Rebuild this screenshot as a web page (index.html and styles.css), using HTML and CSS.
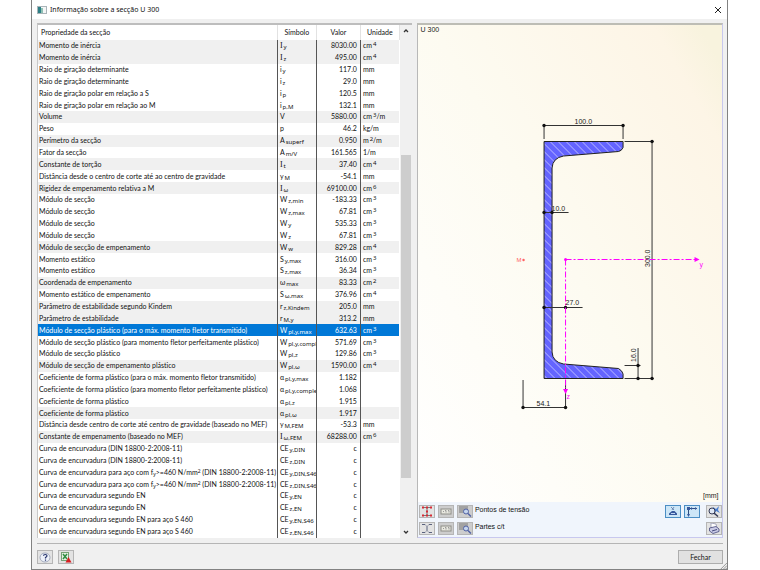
FILE: index.html
```html
<!DOCTYPE html>
<html lang="pt">
<head>
<meta charset="utf-8">
<title>Informação sobre a secção U 300</title>
<link rel="stylesheet" href="styles.css">
</head>
<body>
<main class="dialog">
  <header class="titlebar">
    <svg class="app-icon" viewBox="0 0 10 8"><rect x=".5" y=".5" width="9" height="7" fill="#f4f6f6" stroke="#a9b4b8"/><rect x="1" y="1" width="3" height="6" fill="#2d7f86"/><rect x="4" y="2" width="2" height="5" fill="#8fc0b4"/></svg>
    <h1 class="title">Informação sobre a secção U 300</h1>
    <button class="close" type="button" aria-label="Fechar janela"><svg viewBox="0 0 8 8"><path d="M1 1L7 7M7 1L1 7" stroke="#222" stroke-width="1" fill="none"/></svg></button>
  </header>

  <div class="content">
    <section class="list">
      <table class="props">
        <colgroup><col><col class="c-sym"><col class="c-val"><col class="c-unit"></colgroup>
        <thead><tr><th>Propriedade da secção</th><th>Símbolo</th><th>Valor</th><th>Unidade</th></tr></thead>
        <tbody>
          <tr class="alt"><td>Momento de inércia</td><td><i>I</i><sub>y</sub></td><td>8030.00</td><td>cm<sup>4</sup></td></tr>
          <tr class="alt"><td>Momento de inércia</td><td><i>I</i><sub>z</sub></td><td>495.00</td><td>cm<sup>4</sup></td></tr>
          <tr><td>Raio de giração determinante</td><td>i<sub>y</sub></td><td>117.0</td><td>mm</td></tr>
          <tr><td>Raio de giração determinante</td><td>i<sub>z</sub></td><td>29.0</td><td>mm</td></tr>
          <tr><td>Raio de giração polar em relação a S</td><td>i<sub>p</sub></td><td>120.5</td><td>mm</td></tr>
          <tr><td>Raio de giração polar em relação ao M</td><td>i<sub>p,M</sub></td><td>132.1</td><td>mm</td></tr>
          <tr class="alt"><td>Volume</td><td>V</td><td>5880.00</td><td>cm<sup>3</sup>/m</td></tr>
          <tr><td>Peso</td><td>p</td><td>46.2</td><td>kg/m</td></tr>
          <tr class="alt"><td>Perímetro da secção</td><td>A<sub>superf</sub></td><td>0.950</td><td>m<sup>2</sup>/m</td></tr>
          <tr><td>Fator da secção</td><td>A<sub>m/V</sub></td><td>161.565</td><td>1/m</td></tr>
          <tr class="alt"><td>Constante de torção</td><td><i>I</i><sub>t</sub></td><td>37.40</td><td>cm<sup>4</sup></td></tr>
          <tr><td>Distância desde o centro de corte até ao centro de gravidade</td><td>y<sub>M</sub></td><td>-54.1</td><td>mm</td></tr>
          <tr class="alt"><td>Rigidez de empenamento relativa a M</td><td><i>I</i><sub>ω</sub></td><td>69100.00</td><td>cm<sup>6</sup></td></tr>
          <tr><td>Módulo de secção</td><td>W<sub>z,min</sub></td><td>-183.33</td><td>cm<sup>3</sup></td></tr>
          <tr><td>Módulo de secção</td><td>W<sub>z,max</sub></td><td>67.81</td><td>cm<sup>3</sup></td></tr>
          <tr><td>Módulo de secção</td><td>W<sub>y</sub></td><td>535.33</td><td>cm<sup>3</sup></td></tr>
          <tr><td>Módulo de secção</td><td>W<sub>z</sub></td><td>67.81</td><td>cm<sup>3</sup></td></tr>
          <tr class="alt"><td>Módulo de secção de empenamento</td><td>W<sub>w</sub></td><td>829.28</td><td>cm<sup>4</sup></td></tr>
          <tr><td>Momento estático</td><td>S<sub>y,max</sub></td><td>316.00</td><td>cm<sup>3</sup></td></tr>
          <tr><td>Momento estático</td><td>S<sub>z,max</sub></td><td>36.34</td><td>cm<sup>3</sup></td></tr>
          <tr class="alt"><td>Coordenada de empenamento</td><td>ω<sub>max</sub></td><td>83.33</td><td>cm<sup>2</sup></td></tr>
          <tr><td>Momento estático de empenamento</td><td>S<sub>ω,max</sub></td><td>376.96</td><td>cm<sup>4</sup></td></tr>
          <tr class="alt"><td>Parâmetro de estabilidade segundo Kindem</td><td>r<sub>z,Kindem</sub></td><td>205.0</td><td>mm</td></tr>
          <tr class="alt"><td>Parâmetro de estabilidade</td><td>r<sub>M,y</sub></td><td>313.2</td><td>mm</td></tr>
          <tr class="selected"><td>Módulo de secção plástico (para o máx. momento fletor transmitido)</td><td>W<sub>pl,y,max</sub></td><td>632.63</td><td>cm<sup>3</sup></td></tr>
          <tr><td>Módulo de secção plástico (para momento fletor perfeitamente plástico)</td><td>W<sub>pl,y,compl</sub></td><td>571.69</td><td>cm<sup>3</sup></td></tr>
          <tr><td>Módulo de secção plástico</td><td>W<sub>pl,z</sub></td><td>129.86</td><td>cm<sup>3</sup></td></tr>
          <tr class="alt"><td>Módulo de secção de empenamento plástico</td><td>W<sub>pl,ω</sub></td><td>1590.00</td><td>cm<sup>4</sup></td></tr>
          <tr><td>Coeficiente de forma plástico (para o máx. momento fletor transmitido)</td><td>α<sub>pl,y,max</sub></td><td>1.182</td><td></td></tr>
          <tr><td>Coeficiente de forma plástico (para momento fletor perfeitamente plástico)</td><td>α<sub>pl,y,comple</sub></td><td>1.068</td><td></td></tr>
          <tr><td>Coeficiente de forma plástico</td><td>α<sub>pl,z</sub></td><td>1.915</td><td></td></tr>
          <tr class="alt"><td>Coeficiente de forma plástico</td><td>α<sub>pl,ω</sub></td><td>1.917</td><td></td></tr>
          <tr><td>Distância desde centro de corte até centro de gravidade (baseado no MEF)</td><td>y<sub>M,FEM</sub></td><td>-53.3</td><td>mm</td></tr>
          <tr class="alt"><td>Constante de empenamento (baseado no MEF)</td><td><i>I</i><sub>ω,FEM</sub></td><td>68288.00</td><td>cm<sup>6</sup></td></tr>
          <tr><td>Curva de encurvadura (DIN 18800-2:2008-11)</td><td>CE<sub>y,DIN</sub></td><td>c</td><td></td></tr>
          <tr><td>Curva de encurvadura (DIN 18800-2:2008-11)</td><td>CE<sub>z,DIN</sub></td><td>c</td><td></td></tr>
          <tr><td>Curva de encurvadura para aço com f<sub>y</sub>&gt;=460 N/mm<sup>2</sup> (DIN 18800-2:2008-11)</td><td>CE<sub>y,DIN,S46</sub></td><td>c</td><td></td></tr>
          <tr><td>Curva de encurvadura para aço com f<sub>y</sub>&gt;=460 N/mm<sup>2</sup> (DIN 18800-2:2008-11)</td><td>CE<sub>z,DIN,S46</sub></td><td>c</td><td></td></tr>
          <tr><td>Curva de encurvadura segundo EN</td><td>CE<sub>y,EN</sub></td><td>c</td><td></td></tr>
          <tr><td>Curva de encurvadura segundo EN</td><td>CE<sub>z,EN</sub></td><td>c</td><td></td></tr>
          <tr><td>Curva de encurvadura segundo EN para aço S 460</td><td>CE<sub>y,EN,S46</sub></td><td>c</td><td></td></tr>
          <tr><td>Curva de encurvadura segundo EN para aço S 460</td><td>CE<sub>z,EN,S46</sub></td><td>c</td><td></td></tr>
        </tbody>
      </table>
      <div class="scrollbar">
        <svg class="arrow" viewBox="0 0 10 10"><path d="M3 6L5 4L7 6" fill="none" stroke="#333" stroke-width="1.3"/></svg>
        <div class="track"><div class="thumb"></div></div>
        <svg class="arrow" viewBox="0 0 10 10"><path d="M3 4L5 6L7 4" fill="none" stroke="#333" stroke-width="1.3"/></svg>
      </div>
    </section>

    <section class="preview">
      <svg class="canvas" viewBox="418 25 303 477" preserveAspectRatio="xMidYMid meet">
        <defs>
          <pattern id="hatch" width="8" height="8" patternUnits="userSpaceOnUse"><rect width="8" height="8" fill="#6464ff"/><path d="M-1 -1L9 9M-1 7L1 9M7 -1L9 1" stroke="#b9b9ff" stroke-width="1"/></pattern>
          <g id="dot"><circle r="1.7"/></g>
        </defs>
        <text class="lbl" x="420" y="32">U 300</text>
        <text class="lbl" x="718" y="498" text-anchor="end">[mm]</text>
        <path d="M543.5 141.500H622.500V147.500Q621 151 618 151.500L563 156Q552 158 551.500 168V352Q552 362 563 364L618 368.500Q622 371 622.500 374V378.500H543.500Z" fill="url(#hatch)" stroke="#222" stroke-width="1"/>
        <g class="dim">
          <path d="M543.500 125.500H622.500M543.500 124V139M622.500 124V139M624 141.500H653M651.500 141V379M624 378.500H653M543 212.500H568M543 307.500H582M624 365.500H640M637.500 348V379M522.500 380V408M522 407.500H566M565 380V408"/>
        </g>
        <g fill="#111"><use href="#dot" x="543.5" y="125.5"/><use href="#dot" x="622.5" y="125.5"/><use href="#dot" x="651.5" y="141.500"/><use href="#dot" x="651.5" y="378.5"/><use href="#dot" x="543.5" y="212.500"/><use href="#dot" x="551.5" y="212.500"/><use href="#dot" x="543.5" y="307.500"/><use href="#dot" x="565" y="307.500"/><use href="#dot" x="637.5" y="365.5"/><use href="#dot" x="637.5" y="378.5"/><use href="#dot" x="522.5" y="407.500"/><use href="#dot" x="565" y="407.500"/></g>
        <path d="M565 259.500H696M565 259.500V388" fill="none" stroke="#f0f" stroke-width="1" stroke-dasharray="6 2 2 2"/>
        <path d="M694 257L699 259.500L694 262ZM562.500 389H567.500L565 394Z" fill="#f0f"/>
        <circle cx="565" cy="259.500" r="1.5" fill="#f0f"/>
        <text class="axis" x="699" y="267">y</text><text class="axis" x="566" y="399">z</text>
        <text class="shear" x="516" y="262">M</text><circle cx="523" cy="260" r="1.200" fill="#ff6262"/>
        <g class="lbl"><text x="574" y="124">100.0</text><text x="551" y="211">10.0</text><text x="565" y="305">27.0</text><text x="536" y="406">54.1</text><text transform="translate(649 267) rotate(-90)">300.0</text><text transform="translate(635 362) rotate(-90)">16.0</text></g>
      </svg>
      <div class="tools">
        <div class="tool-row">
          <button class="tool" type="button" aria-label="Mostrar pontos de tensão"><svg viewBox="0 0 14 11"><path d="M2 1.500H12M7 1.500V9.500M2 9.500H12" stroke="#777" fill="none"/><path d="M2 0.500h2v2h-2zM6 0.500h2v2h-2zM10 .5h2v2h-2zM6 4.500h2v2h-2zM2 8.500h2v2h-2zM6 8.500h2v2h-2zM10 8.500h2v2h-2z" fill="#d62a35"/></svg></button>
          <button class="tool dim-btn" type="button" aria-label="Numeração dos pontos" disabled><svg viewBox="0 0 14 11"><rect x="2" y="3" width="10" height="5" fill="#e9e9e0" stroke="#8d8d88"/><path d="M4 5.500h1M6 4.500h1v2M9 4.500h1v2" stroke="#999" fill="none"/></svg></button>
          <button class="tool dim-btn" type="button" aria-label="Detalhes dos pontos"><svg viewBox="0 0 14 11"><rect x="1" width="9" height="7" fill="#a2a2a2"/><circle cx="8" cy="5.500" r="2.500" fill="#c5d5ee" stroke="#5263a5"/><path d="M10 7.500L13 10.500" stroke="#5263a5" stroke-width="1.500"/></svg></button>
          <span class="tool-label">Pontos de tensão</span>
          <button class="tool active" type="button" aria-label="Cotas"><svg viewBox="0 0 14 11"><path d="M5 1L8 4M8 1L6 4" stroke="#5b77a5" stroke-width=".8"/><path d="M3 9V7.500L6 5H8.500L11 7.500V9Z" fill="#36589c"/><path d="M5 7.500H9" stroke="#bcd3f3"/></svg></button>
          <button class="tool active gap" type="button" aria-label="Eixos"><svg viewBox="0 0 14 11"><path d="M3.500 10V2.500H12" stroke="#2d4b7c" fill="none"/><path d="M2 1h3v3h-3zM6 1L8 2.500L6 4M10 1L12 2.500L10 4M2 8L3.500 11L5 8" fill="#36589c"/></svg></button>
          <button class="tool" type="button" aria-label="Ajustar vista"><svg viewBox="0 0 14 11"><path d="M6 1L9 3L12 0L11 4L13 7L9 5L7 9L6 5Z" fill="#4a7fd0"/><circle cx="5" cy="5" r="3" fill="#dfe8f6" stroke="#333a55"/><path d="M7 7L11 10.500" stroke="#333a55" stroke-width="1.500"/></svg></button>
        </div>
        <div class="tool-row">
          <button class="tool" type="button" aria-label="Mostrar partes c/t"><svg viewBox="0 0 14 11"><path d="M2 1.500H5M9 1.500H12M2 9.500H5M9 9.500H12M5 1.500L6 2.500M9 1.500L8 2.500M7 3V8M5 9.500L6 8.500M9 9.500L8 8.500" stroke="#59627e" fill="none"/></svg></button>
          <button class="tool dim-btn" type="button" aria-label="Numeração das partes" disabled><svg viewBox="0 0 14 11"><rect x="2" y="3" width="10" height="5" fill="#e9e9e0" stroke="#8d8d88"/><path d="M4 5.500h1M6 4.500h1v2M9 4.500h1v2" stroke="#999" fill="none"/></svg></button>
          <button class="tool dim-btn" type="button" aria-label="Detalhes das partes"><svg viewBox="0 0 14 11"><rect x="1" width="9" height="7" fill="#a2a2a2"/><circle cx="8" cy="5.500" r="2.500" fill="#c5d5ee" stroke="#5263a5"/><path d="M10 7.500L13 10.500" stroke="#5263a5" stroke-width="1.500"/></svg></button>
          <span class="tool-label">Partes c/t</span>
          <button class="tool" type="button" aria-label="Imprimir"><svg viewBox="0 0 14 11"><path d="M4 0L9 1L10 5L4 5Z" fill="#fff" stroke="#888ca8" stroke-width=".7"/><path d="M2.500 5L9 3.500L12 6V8.500L6 10.500L2.500 8Z" fill="#c9cbe6" stroke="#45497c" stroke-width=".8"/><path d="M5 8L10 6.500" stroke="#45497c"/></svg></button>
        </div>
      </div>
    </section>
  </div>

  <footer class="footer">
    <button class="tool" type="button" aria-label="Ajuda"><svg viewBox="0 0 14 11"><ellipse cx="7" cy="5.500" rx="5" ry="4.500" fill="#eef2fa" stroke="#a2aabd"/><path d="M5.500 3.800Q5.500 2.500 7.200 2.500Q9 2.500 9 3.800Q9 4.800 7.500 5.500V6.500M7.500 7.500V8.700" stroke="#28366e" stroke-width="1.200" fill="none"/></svg></button>
    <button class="tool" type="button" aria-label="Exportar"><svg viewBox="0 0 14 11"><rect x="2.500" y=".5" width="7" height="8" fill="#e5f0e4" stroke="#77a277"/><path d="M4 2L8 7M8 2L4 7" stroke="#2f8c41" stroke-width="1.500"/><path d="M9.500 5L12.500 10.500H6.500Z" fill="#d81e22"/></svg></button>
    <button class="ok" type="button">Fechar</button>
  </footer>
  <svg class="grip" viewBox="0 0 8 8"><path d="M1 8L8 1M4 8L8 4M6.500 8L8 6.500" stroke="#8c8c8c" fill="none"/></svg>
</main>
</body>
</html>
```
FILE: styles.css
```css
* { box-sizing: border-box; }
body {
  margin: 0;
  padding: 0 32px 0 31px;
  background: #fff;
  color: #111;
  font: 7px/11px Lato, "Liberation Sans", sans-serif;
  font-variant-ligatures: none;
}
button { font: inherit; color: inherit; padding: 0; margin: 0; }
svg { display: block; }
.dialog {
  position: relative;
  display: flex;
  flex-direction: column;
  min-height: 100vh;
  border: 1px solid #828282;
  border-top: 0;
  background: #f0f0f0;
}
.titlebar {
  display: flex;
  align-items: center;
  gap: 3px;
  height: 19px;
  padding: 0 5px;
  background: #fff;
}
.app-icon { width: 10px; height: 8px; }
.title { flex: 1; margin: 0; font: 7px/11px "Noto Sans", sans-serif; }
.close { width: 8px; height: 8px; border: 0; background: none; }
.content {
  flex: 1 0 auto;
  display: flex;
  gap: 5px;
  padding: 4px 4px 5px 5px;
}
.list {
  flex: 375 1 0;
  display: flex;
  min-width: 0;
  border: 1px solid #c8c8c8;
  border-top: 2px solid #bdbdbd;
  border-right: 0;
  border-bottom: 0;
  background: #fff;
}
.props {
  flex: 1;
  width: 100%;
  min-width: 0;
  border-collapse: collapse;
  table-layout: fixed;
}
.c-sym { width: 39px; }
.c-val { width: 44px; }
.c-unit { width: 39px; }
.props th {
  height: 15px;
  padding: 0;
  font-weight: 400;
  text-align: center;
  border-right: 1px solid #e2e2e2;
}
.props th:first-child { padding-left: 3px; text-align: left; }
.props td {
  height: 11px;
  padding: 0 1px;
  overflow: hidden;
  white-space: nowrap;
  border-right: 1px solid #555;
}
.props td:first-child { padding-right: 0; }
.props td:nth-child(2) { padding-left: 2px; }
.props td:nth-child(3) { padding-right: 3px; text-align: right; }
.props td:last-child { padding-left: 2px; border-right: 0; }
.props i { font: 8px/0 "Liberation Serif", serif; }
.props sub, .props sup {
  margin-left: 1px;
  font: 6px/0 "Noto Sans", "Liberation Sans", sans-serif;
}
.props td:first-child sub, .props td:first-child sup { margin-left: 0; font-size: 5px; }
.props sub { vertical-align: -1px; }
.props sup { vertical-align: 2px; }
.alt { background: #f0f0f0; }
.selected { background: #0078d7; color: #fff; }
.scrollbar {
  flex: none;
  display: flex;
  flex-direction: column;
  width: 12px;
  padding: 0 1px;
  background: #f0f0f0;
}
.arrow { width: 10px; height: 12px; }
.track { flex: 1; display: flex; flex-direction: column; justify-content: flex-end; }
.thumb { height: 66%; margin-bottom: 48px; background: #cdcdcd; }
.preview {
  flex: 305 1 0;
  display: flex;
  flex-direction: column;
  border: 1px solid #b8b8b8;
  border-top: 2px solid #bdbdb5;
  border-right: 1px solid #c8c8ee;
  border-bottom: 1px solid #c8c8ee;
  background: #f0f5fc;
}
.canvas {
  flex: 1 1 0px;
  width: 100%;
  height: 0;
  min-height: 0;
  background: linear-gradient(60deg, #fff 0%, #fdfbf1 50%, #fdf5e6 88%, #f8f3de 96%);
}
.lbl { font: 7px "Liberation Sans", sans-serif; fill: #222; }
.axis { font: 7px "Liberation Sans", sans-serif; fill: #f0f; }
.shear { font: 6px "Liberation Sans", sans-serif; fill: #ff6262; }
.dim { fill: none; stroke: #333; stroke-width: 1px; }
.tools {
  display: flex;
  flex-direction: column;
  gap: 4px;
  padding: 3px 0 2px 1px;
}
.tool-row { display: flex; gap: 3px; }
.tool-label { flex: 1; height: 13px; margin-left: -1px; font: 7px/9px "Liberation Sans", sans-serif; }
.tool {
  display: flex;
  align-items: center;
  justify-content: center;
  width: 16px;
  height: 13px;
  border: 1px solid #b5b5b5;
  background: #e3e3e3;
}
.tool svg { width: 14px; height: 11px; }
.dim-btn { background: #cdcdcd; }
.active { border-color: #4b8ec4; background: #cde6f7; }
.gap { margin-right: 3px; }
.footer {
  display: flex;
  align-items: center;
  gap: 5px;
  margin: 0 4px 0 5px;
  padding: 6px 0 5px;
  border-top: 1px solid #b5b5b5;
}
.footer .tool { height: 14px; }
.ok {
  width: 45px;
  height: 14px;
  margin-left: auto;
  border: 1px solid #adadad;
  background: #e1e1e1;
}
.grip { position: absolute; right: 0; bottom: 0; width: 7px; height: 7px; }
```
